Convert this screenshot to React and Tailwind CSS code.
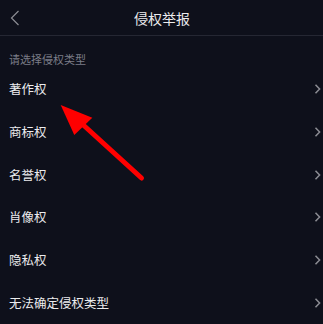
import React from "react";

const items = ["著作权", "商标权", "名誉权", "肖像权", "隐私权", "无法确定侵权类型"];

function Chevron() {
  return (
    <svg width="7" height="10" viewBox="0 0 7 10" className="block">
      <path d="M1.5 0.8 L5.6 5 L1.5 9.2" fill="none" stroke="#8b8c93" strokeWidth="1.5" />
    </svg>
  );
}

export default function App() {
  return (
    <div
      className="relative w-[323px] h-[324px] overflow-hidden bg-[#0e101b] text-[#ececee]"
      style={{ fontFamily: '"Noto Sans CJK SC", "Noto Sans", sans-serif' }}
    >
      <div className="relative h-[35px] flex items-center justify-center">
        <div className="absolute left-[10px] top-[10px]">
          <svg width="10" height="16" viewBox="0 0 10 16" className="block">
            <path d="M8.5 1 L1.5 8 L8.5 15" fill="none" stroke="#8b8c93" strokeWidth="1.2" />
          </svg>
        </div>
        <span className="text-[14px] leading-[16px] pl-[1px]">侵权举报</span>
      </div>
      <div className="h-[1px] bg-[#252733]" />
      <div className="h-[31.6px] pt-[16px] pl-[9px] text-[11px] leading-[14px] text-[#7b7d87]">
        请选择侵权类型
      </div>
      <div className="flex flex-col">
        {items.map((t) => (
          <div key={t} className="h-[42.8px] flex items-center justify-between pl-[9px] pr-[2px]">
            <span className="text-[12.5px] leading-[16px]">{t}</span>
            <Chevron />
          </div>
        ))}
      </div>
      <svg className="absolute left-0 top-0 pointer-events-none" width="323" height="324" viewBox="0 0 323 324">
        <line x1="80" y1="122" x2="141.5" y2="178" stroke="#ff0000" strokeWidth="5" strokeLinecap="round" />
        <polygon points="60.7,105 92.3,117.7 74.3,135" fill="#ff0000" />
      </svg>
    </div>
  );
}
